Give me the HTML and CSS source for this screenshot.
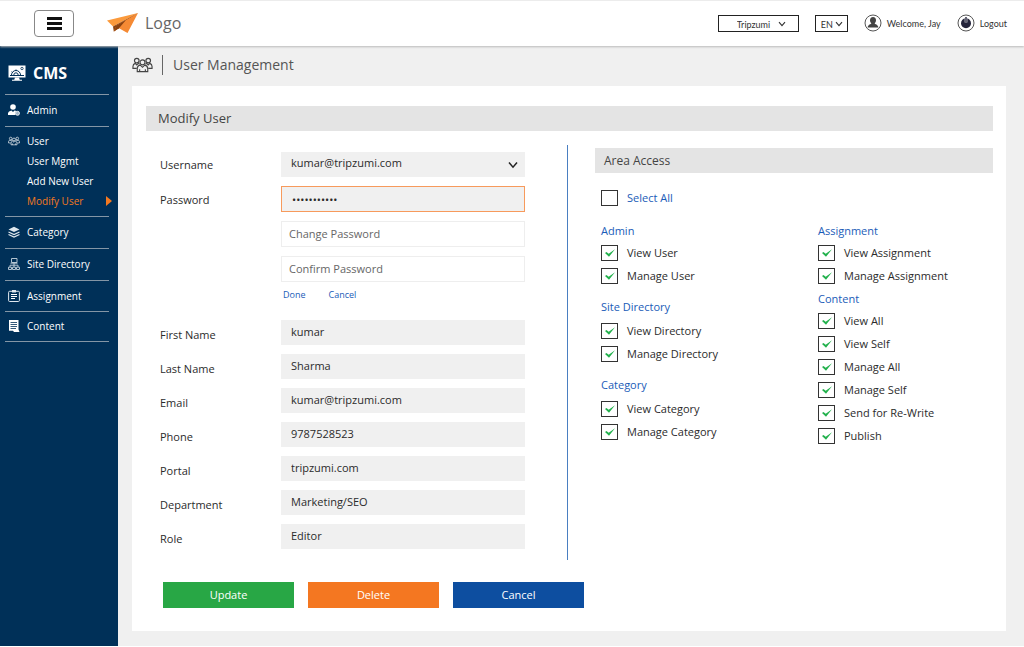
FILE: index.html
```html
<!DOCTYPE html>
<html lang="en">
<head>
<meta charset="utf-8">
<meta name="viewport" content="width=device-width, initial-scale=1">
<title>User Management</title>
<link rel="stylesheet" href="styles.css">
</head>
<body>
<svg class="sprite" aria-hidden="true">
  <symbol id="chevron" viewBox="0 0 10 8"><path d="M1 1.5 5 6.2 9 1.5" fill="none" stroke="currentColor" stroke-width="1.5"/></symbol>
  <symbol id="people" viewBox="0 0 22 16">
    <g fill="none" stroke="currentColor" stroke-width="1.2">
      <circle cx="5" cy="3.4" r="2.4"/><circle cx="17" cy="3.4" r="2.4"/><circle cx="11" cy="5.2" r="2.6"/>
      <path d="M5.5 15V12q0-3.4 3.2-3.9L11 10.4l2.3-2.3q3.2.5 3.2 3.9v3ZM8 12.5V15M14 12.5V15"/>
      <path d="M5 11.6H1V9.5Q1 7 3.4 6.3L5 8l1.6-1.7 1.4.8M17 11.6h4V9.5q0-2.5-2.4-3.2L17 8l-1.6-1.7-1.4.8"/>
    </g>
  </symbol>
</svg>
<header class="topbar">
  <button class="menu-btn" type="button" aria-label="Menu"><span class="menu-line"></span><span class="menu-line"></span><span class="menu-line"></span></button>
  <a class="brand" href="#">
    <svg class="brand-mark" viewBox="0 0 31 21" aria-hidden="true"><path d="M0 7.5 31 0 6 13.5Z" fill="#fb9a3c"/><path d="M6 13.5 31 0 6.8 18.6Z" fill="#8a4312"/><path d="M31 0 20.5 20 12 15.2 6.8 18.6 9.5 12.5Z" fill="#f58a34"/><path d="m12 15.2-5.2 3.4L9.5 12.5 19 7Z" fill="#8a4312"/></svg>
    <span>Logo</span>
  </a>
  <div class="tools">
    <span class="mini-select mini-select-wide">
      <select aria-label="Portal"><option>Tripzumi</option></select>
      <svg class="mini-chevron"><use href="#chevron"/></svg>
    </span>
    <span class="mini-select">
      <select aria-label="Language"><option>EN</option></select>
      <svg class="mini-chevron"><use href="#chevron"/></svg>
    </span>
    <a class="tool" href="#">
      <svg class="tool-icon" viewBox="0 0 18 18" aria-hidden="true"><circle cx="9" cy="9" r="8" fill="none" stroke="#555"/><path d="M9 3c2 0 3 1.300 3 3.200 0 1.400-.6 2.500-1.400 3.100.3 1 3.400 1.200 3.800 4.200H3.600c.4-3 3.500-3.200 3.800-4.200C6.600 8.700 6 7.600 6 6.200 6 4.300 7 3 9 3Z" fill="#444"/></svg>
      <span>Welcome, Jay</span>
    </a>
    <a class="tool" href="#">
      <svg class="tool-icon" viewBox="0 0 18 18" aria-hidden="true"><circle cx="9" cy="9" r="8" fill="none" stroke="#555"/><circle cx="9" cy="9.300" r="5" fill="#23233a"/><path d="M9 3.500v5" stroke="#fff" stroke-width="2.600"/><path d="M9 3v5.600" stroke="#23233a" stroke-width="1.400"/></svg>
      <span>Logout</span>
    </a>
  </div>
</header>
<div class="layout">
  <nav class="sidebar" aria-label="Main">
    <a class="cms" href="#">
      <svg class="cms-icon" viewBox="0 0 18 16" aria-hidden="true"><rect x=".5" y=".5" width="17" height="12" fill="#fff"/><path d="M7 12.500h4l1 3H6ZM4 14.700h10v1H4Z" fill="#fff"/><path d="M3.500 10a4.500 4.500 0 0 1 9 0M5.800 10a2.200 2.200 0 0 1 4.400 0M3.600 6.700l1.200 1M8 4.500v1.400M2 10.500h14" fill="none" stroke="#003058" stroke-width="1"/><circle cx="14" cy="3.500" r="1.200" fill="none" stroke="#003058" stroke-width=".8"/></svg>
      <span>CMS</span>
    </a>
    <ul class="nav">
      <li class="nav-item"><a class="nav-link" href="#">
        <svg class="nav-icon" viewBox="0 0 12 12"><circle cx="5" cy="3" r="2.800" fill="#fff"/><path d="M0 11V9q.3-2 3.500-2.500L5 8l1.500-1.500 2 .5L7.500 8v3Z" fill="#fff"/><circle cx="9.500" cy="9.300" r="2" fill="#9fb4c6" stroke="#fff" stroke-width=".8"/></svg>Admin</a></li>
      <li class="nav-item nav-open"><a class="nav-link" href="#">
        <svg class="nav-icon nav-icon-people"><use href="#people"/></svg>User</a>
        <ul class="subnav">
          <li><a href="#">User Mgmt</a></li>
          <li><a href="#">Add New User</a></li>
          <li><a class="current" href="#" aria-current="page">Modify User</a></li>
        </ul>
      </li>
      <li class="nav-item"><a class="nav-link" href="#">
        <svg class="nav-icon" viewBox="0 0 12 12"><path d="m6 .8 5.500 2.600L6 6 .5 3.400Z" fill="#dfe7ee"/><path d="M.5 6 6 8.600 11.500 6M.5 8.500 6 11.100l5.500-2.600" fill="none" stroke="#dfe7ee" stroke-width="1.200"/></svg>Category</a></li>
      <li class="nav-item"><a class="nav-link" href="#">
        <svg class="nav-icon" viewBox="0 0 12 12"><g fill="none" stroke="#c5d2de" stroke-width=".9"><path d="M3.500.5h5.500v4H3.500ZM2.500 5.200h7M6 5.200v4M2 9.200V7.200h8v2"/><path d="M.5 9.200h3v2.300h-3ZM4.500 9.200h3v2.300h-3ZM8.500 9.200h3v2.300h-3Z"/></g></svg>Site Directory</a></li>
      <li class="nav-item nav-tight"><a class="nav-link" href="#">
        <svg class="nav-icon" viewBox="0 0 12 12"><rect x=".6" y="1.300" width="10.800" height="10.200" rx="1" fill="none" stroke="#dfe7ee"/><path d="M4 0h4v2.500H4Z" fill="#dfe7ee"/><path d="M3 4.500h6M3 6.500h6M3 8.500h4" stroke="#fff" stroke-width="1"/></svg>Assignment</a></li>
      <li class="nav-item nav-tight"><a class="nav-link" href="#">
        <svg class="nav-icon" viewBox="0 0 12 12"><path d="M1 0h9.500v9.500l1 2.500H6L5 10.800H1Z" fill="#fff"/><path d="M2.500 2.500H9M2.500 4.500H9M2.500 6.500H9M2.500 8.500H8" stroke="#003058" stroke-width=".8"/></svg>Content</a></li>
    </ul>
  </nav>
  <main class="main">
    <div class="page-head">
      <svg class="page-icon" aria-hidden="true"><use href="#people"/></svg>
      <h1>User Management</h1>
    </div>
    <form class="panel">
      <h2 class="bar bar-main">Modify User</h2>
      <div class="columns">
        <div class="fields">
          <div class="row row-tall"><label for="username">Username</label>
            <span class="select-wrap"><select class="field" id="username"><option>kumar@tripzumi.com</option></select><svg class="chevron"><use href="#chevron"/></svg></span></div>
          <div class="row row-tall"><label for="password">Password</label><input class="field active" id="password" type="password" value="abcdefghijk"></div>
          <div class="row row-tall"><span></span><input class="field blank" type="password" placeholder="Change Password" aria-label="Change Password"></div>
          <div class="row row-tall"><span></span><input class="field blank" type="password" placeholder="Confirm Password" aria-label="Confirm Password"></div>
          <div class="inline-actions"><a href="#">Done</a><a href="#">Cancel</a></div>
          <div class="row"><label for="first">First Name</label><input class="field" id="first" value="kumar"></div>
          <div class="row"><label for="last">Last Name</label><input class="field" id="last" value="Sharma"></div>
          <div class="row"><label for="email">Email</label><input class="field" id="email" value="kumar@tripzumi.com"></div>
          <div class="row"><label for="phone">Phone</label><input class="field" id="phone" value="9787528523"></div>
          <div class="row"><label for="portal">Portal</label><input class="field" id="portal" value="tripzumi.com"></div>
          <div class="row"><label for="dept">Department</label><input class="field" id="dept" value="Marketing/SEO"></div>
          <div class="row"><label for="role">Role</label><input class="field" id="role" value="Editor"></div>
        </div>
        <section class="access">
          <h2 class="bar">Area Access</h2>
          <label class="check check-all"><input type="checkbox">Select All</label>
          <div class="groups">
            <div class="group-col">
              <fieldset class="group"><legend>Admin</legend>
                <label class="check"><input type="checkbox" checked>View User</label>
                <label class="check"><input type="checkbox" checked>Manage User</label></fieldset>
              <fieldset class="group group-loose"><legend>Site Directory</legend>
                <label class="check"><input type="checkbox" checked>View Directory</label>
                <label class="check"><input type="checkbox" checked>Manage Directory</label></fieldset>
              <fieldset class="group group-loose"><legend>Category</legend>
                <label class="check"><input type="checkbox" checked>View Category</label>
                <label class="check"><input type="checkbox" checked>Manage Category</label></fieldset>
            </div>
            <div class="group-col group-col-tight">
              <fieldset class="group"><legend>Assignment</legend>
                <label class="check"><input type="checkbox" checked>View Assignment</label>
                <label class="check"><input type="checkbox" checked>Manage Assignment</label></fieldset>
              <fieldset class="group"><legend>Content</legend>
                <label class="check"><input type="checkbox" checked>View All</label>
                <label class="check"><input type="checkbox" checked>View Self</label>
                <label class="check"><input type="checkbox" checked>Manage All</label>
                <label class="check"><input type="checkbox" checked>Manage Self</label>
                <label class="check"><input type="checkbox" checked>Send for Re-Write</label>
                <label class="check"><input type="checkbox" checked>Publish</label></fieldset>
            </div>
          </div>
        </section>
      </div>
      <div class="actions">
        <button class="btn btn-green" type="button">Update</button>
        <button class="btn btn-orange" type="button">Delete</button>
        <button class="btn btn-blue" type="button">Cancel</button>
      </div>
    </form>
  </main>
</div>
</body>
</html>
```
FILE: styles.css
```css
* { box-sizing: border-box; }
body {
  margin: 0;
  min-height: 100vh;
  display: flex;
  flex-direction: column;
  padding-bottom: 1px;
  background: #fff;
  color: #2b2b2b;
  font: 11px/20px "Open Sans", "Noto Sans", sans-serif;
}
.sprite { display: none; }
a { color: inherit; text-decoration: none; }
h1, h2 { margin: 0; font-weight: 400; }
ul { margin: 0; padding: 0; list-style: none; }
input, select, button { font: inherit; color: inherit; }

.topbar {
  position: relative;
  display: flex;
  align-items: center;
  height: 46px;
  padding: 0 17px 1px 34px;
  border-top: 1px solid #ececec;
  background: #fff;
  box-shadow: 0 1px 2px #bbb;
}
.menu-btn {
  display: flex;
  flex-direction: column;
  align-items: center;
  justify-content: center;
  gap: 2px;
  width: 40px;
  height: 27px;
  padding: 0;
  border: 1px solid #888;
  border-radius: 4px;
  background: #fff;
}
.menu-line { width: 15px; height: 3px; background: #111; }
.brand {
  display: flex;
  align-items: center;
  gap: 7px;
  margin-left: 33px;
  font-size: 16px;
  color: #666;
}
.brand-mark { width: 31px; height: 21px; }
.tools {
  display: flex;
  align-items: center;
  gap: 16px;
  margin-left: auto;
  font: 9px/17px Lato, sans-serif;
  color: #333;
}
.mini-select { position: relative; display: flex; width: 33px; }
.mini-select-wide { width: 81px; }
.mini-select select {
  width: 100%;
  height: 17px;
  padding: 0 0 0 5px;
  border: 1px solid #222;
  border-radius: 0;
  background: #fff;
  appearance: none;
}
.mini-select-wide select { padding-left: 18px; }
.mini-chevron { position: absolute; right: 5px; top: 6px; width: 8px; height: 6px; pointer-events: none; }
.mini-select-wide .mini-chevron { right: 13px; }
.tool { display: flex; align-items: center; gap: 5px; }
.tool-icon { width: 18px; height: 18px; }

.layout { display: flex; flex: 1; }
.sidebar {
  flex: 0 0 118px;
  padding: 0 9px 0 5px;
  background: #003058;
  color: #fff;
  font-size: 10px;
}
.cms {
  display: flex;
  align-items: center;
  gap: 7px;
  height: 48px;
  padding: 5px 0 0 3px;
  font-size: 16px;
  font-weight: 700;
}
.cms-icon { width: 18px; height: 16px; }
.nav-item { padding: 5px 0 6px 3px; border-top: 1px solid #8496a6; }
.nav-open { padding: 4px 0 5px 3px; }
.nav-tight { padding-bottom: 5px; }
.nav-item:last-child { padding-top: 4px; border-bottom: 1px solid #8496a6; }
.nav-link { display: flex; align-items: center; gap: 7px; }
.nav-icon { width: 12px; height: 12px; }
.nav-icon-people { stroke-width: 2; }
.subnav { padding-left: 19px; }
.current { display: flex; align-items: center; justify-content: space-between; margin-right: -3px; color: #f47920; }
.current::after { content: ""; border: 5px solid transparent; border-left: 6px solid #f47920; border-right: 0; }

.main { flex: 1; min-width: 0; padding: 0 18px 15px 14px; background: #f0f0f0; }
.page-head { display: flex; align-items: center; gap: 9px; height: 40px; padding-bottom: 3px; }
.page-icon { width: 21px; height: 16px; color: #444; }
.page-head h1 { padding-left: 10px; border-left: 1px solid #666; font-size: 14px; line-height: 20px; color: #555; }
.panel { padding: 20px 13px 23px 14px; background: #fff; }
.bar { height: 25px; padding-left: 9px; background: #e4e4e4; font-size: 12px; line-height: 25px; color: #444; }
.bar-main { padding-left: 12px; font-size: 13px; }
.columns {
  display: grid;
  grid-template-columns: minmax(0, 422fr) minmax(0, 398fr);
  gap: 27px;
  margin-top: 14px;
}
.fields {
  display: flex;
  flex-direction: column;
  gap: 9px;
  padding: 6px 42px 11px 14px;
  border-right: 1px solid #4a7fc1;
}
.row { display: grid; grid-template-columns: 121px minmax(0, 1fr); align-items: center; height: 25px; }
.row-tall { height: 26px; }
.row label { padding-top: 4px; }
.row-tall label { padding-top: 2px; }
.field {
  width: 100%;
  height: 25px;
  padding: 0 10px 3px;
  border: 0;
  border-radius: 0;
  outline: 0;
  background: #f0f0f0;
  appearance: none;
}
.select-wrap { position: relative; display: flex; }
.chevron { position: absolute; right: 7px; top: 9px; width: 10px; height: 8px; pointer-events: none; color: #222; }
.active { height: 26px; padding-bottom: 0; border: 1px solid #f79a5c; }
.blank { height: 26px; padding: 0 7px 1px; border: 1px solid #eee; background: #fff; }
.blank::placeholder { color: #666; opacity: 1; }
.inline-actions { display: flex; gap: 23px; margin: -6px 0 6px; padding-left: 123px; font-size: 9px; line-height: 20px; color: #1a5cb8; }

.access { padding-top: 3px; }
.check { display: flex; align-items: center; gap: 9px; height: 23px; }
.check input {
  appearance: none;
  width: 17px;
  height: 16px;
  margin: 0;
  border: 1px solid #333;
  background: #fff;
}
.check input:checked {
  background: url("data:image/svg+xml,%3Csvg xmlns='http://www.w3.org/2000/svg' viewBox='0 0 10 8'%3E%3Cpath d='M0 4 1.500 3 3.700 4.800 10 .3 4 7.800Z' fill='%2322b14c'/%3E%3C/svg%3E") center / 10px 8px no-repeat;
}
.check-all { margin: 13px 0 12px; padding-left: 6px; color: #1a5cb8; }
.groups { display: grid; grid-template-columns: 217px minmax(0, 1fr); padding-left: 6px; }
.group-col { display: flex; flex-direction: column; gap: 10px; }
.group-col-tight { gap: 2px; }
.group { margin: 0; padding: 0; border: 0; min-width: 0; }
.group legend { padding: 0; color: #1a5cb8; }
.group-loose legend { margin-bottom: 2px; }

.actions { display: flex; gap: 14px; margin-top: 22px; padding-left: 17px; }
.btn { width: 131px; height: 26px; padding: 0; border: 0; color: #fff; }
.btn-green { background: #28a745; }
.btn-orange { background: #f47721; }
.btn-blue { background: #0d4ea0; }
```
